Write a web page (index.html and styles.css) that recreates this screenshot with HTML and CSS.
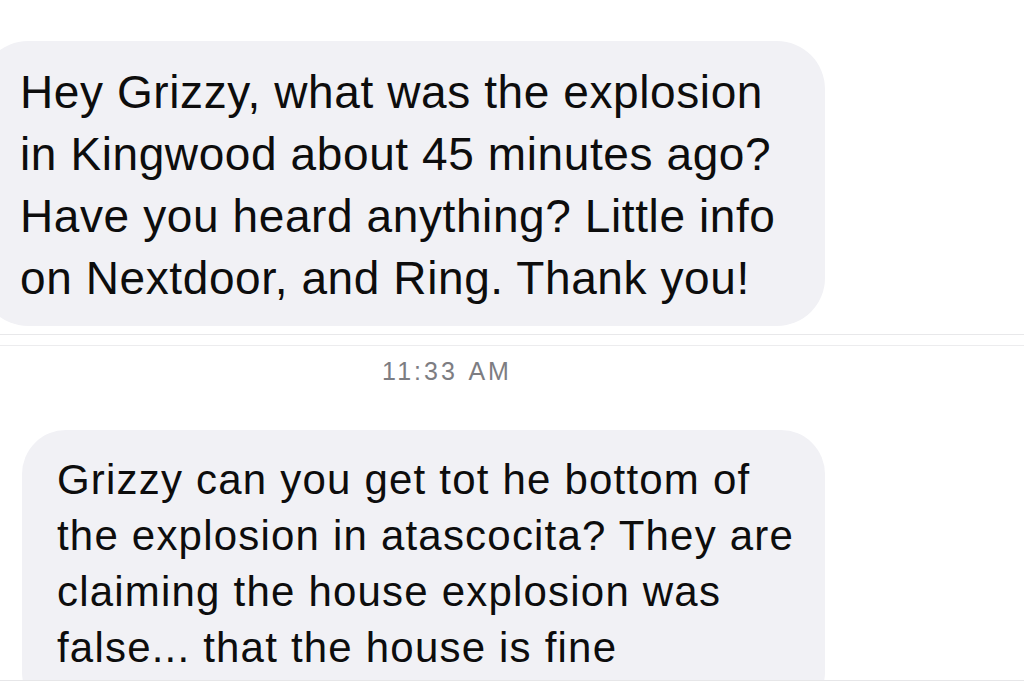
FILE: index.html
```html
<!DOCTYPE html>
<html lang="en">
<head>
    <meta charset="UTF-8">
    <meta name="viewport" content="width=device-width, initial-scale=1.0">
    <link rel="stylesheet" href="styles.css">
    <title>Messages</title>
</head>
<body>

<div class="thread">
    <div class="upper">
        <div class="bubble bubble-big">
            Hey Grizzy, what was the explosion<br>
            in Kingwood about 45 minutes ago?<br>
            Have you heard anything? Little info<br>
            on Nextdoor, and Ring. Thank you!
        </div>
    </div>

    <div class="divider"></div>

    <div class="time">11:33 AM</div>

    <div class="lower">
        <div class="bubble bubble-small">
            Grizzy can you get tot he bottom of<br>
            the explosion in atascocita? They are<br>
            claiming the house explosion was<br>
            false... that the house is fine
        </div>
    </div>
</div>

</body>
</html>
```

FILE: styles.css
```css
body {
    margin: 0;
    background-color: #fff;
    font-family: "Liberation Sans", Arial, sans-serif;
    color: #0d0d0d;
    overflow: hidden;
}

.thread {
    width: 1024px;
    height: 683px;
    overflow: hidden;
}

.upper {
    padding-top: 41px;
}

.bubble {
    background-color: #f1f1f5;
    border-radius: 48px;
}

.bubble-big {
    width: 805px;
    margin-left: -20px;
    padding: 20px 0 17px 40px;
    font-size: 46px;
    line-height: 62px;
    letter-spacing: 0.6px;
}

.divider {
    margin-top: 8px;
    height: 10px;
    border-top: 1px solid #e8e8ea;
    border-bottom: 1px solid #ececee;
}

.time {
    margin-top: 10px;
    padding-right: 130px;
    text-align: center;
    font-size: 25px;
    line-height: 30px;
    letter-spacing: 3px;
    word-spacing: 2px;
    color: #7d7d82;
}

.lower {
    margin-top: 44px;
    height: 250px;
    overflow: hidden;
    border-bottom: 1px solid #e6e6e8;
}

.bubble-small {
    width: 768px;
    margin-left: 22px;
    padding: 22px 0 40px 35px;
    font-size: 42px;
    line-height: 56px;
    letter-spacing: 1.2px;
    border-radius: 44px;
}
```
